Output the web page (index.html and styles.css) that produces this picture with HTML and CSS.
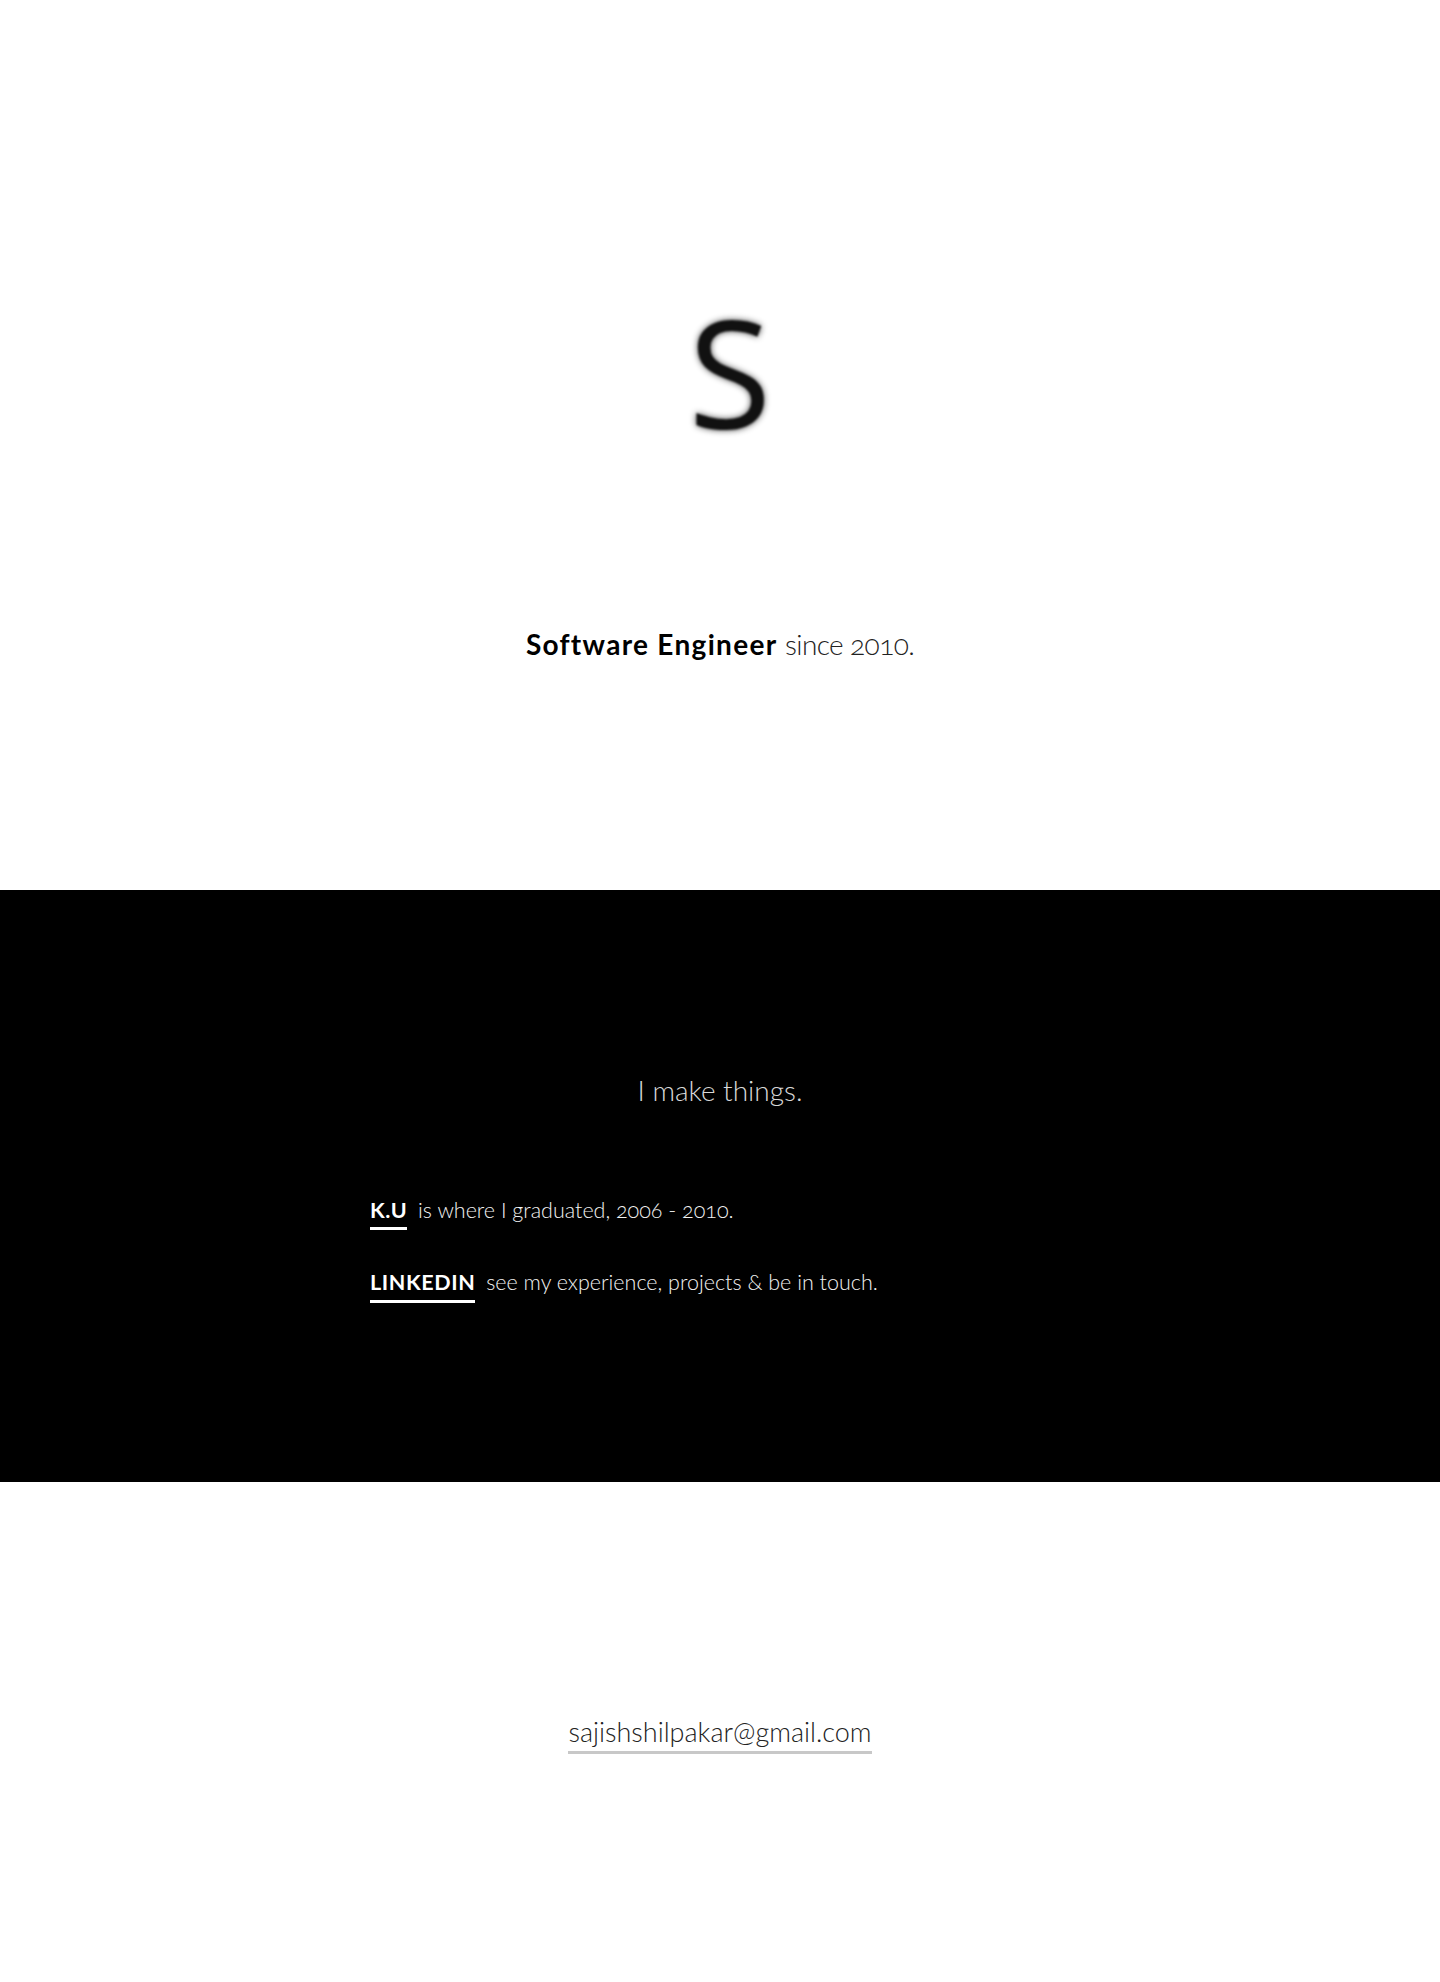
FILE: index.html
```html
<!DOCTYPE html>
<html lang="en">
<head>
<meta charset="utf-8">
<title>Sajish Shilpakar</title>
<link rel="stylesheet" href="styles.css">
</head>
<body>
<header class="hero">
  <div class="logo">S</div>
  <p class="tagline"><strong>Software Engineer</strong> <span class="since">since 2010.</span></p>
</header>
<section class="about">
  <h2 class="about-title">I make things.</h2>
  <div class="about-list">
    <p class="about-row"><a class="label" href="#">K.U</a> is where I graduated, 2006 - 2010.</p>
    <p class="about-row"><a class="label" href="#">LINKEDIN</a> see my experience, projects &amp; be in touch.</p>
  </div>
</section>
<footer class="contact">
  <a class="email" href="#">sajishshilpakar@gmail.com</a>
</footer>
</body>
</html>
```
FILE: styles.css
```css
* { box-sizing: border-box; }
html, body { margin: 0; padding: 0; }
body {
  background: #fff;
  font-family: "Lato", "Open Sans", sans-serif;
  color: #222;
  font-variant-numeric: oldstyle-nums;
}
.hero {
  height: 890px;
  padding-top: 296px;
  display: flex;
  flex-direction: column;
  align-items: center;
}
.logo {
  font-family: "Open Sans", sans-serif;
  font-weight: 400;
  font-size: 150px;
  line-height: 1;
  height: 150px;
  color: #111;
  margin-left: 20px;
  text-shadow: 0 0 6px rgba(0,0,0,0.75);
  filter: blur(1px);
}
.tagline {
  margin: 182px 0 0;
  font-size: 28px;
  line-height: 1.2;
  font-weight: 300;
  color: #222;
}
.tagline strong { font-weight: 700; color: #000; letter-spacing: 1.3px; }
.since { letter-spacing: -0.6px; }
.about {
  background: #000;
  height: 592px;
  padding-top: 184px;
}
.about-title {
  margin: 0;
  text-align: center;
  font-size: 28px;
  line-height: 1.2;
  font-weight: 300;
  color: #d8d8d8;
}
.about-list {
  width: 700px;
  margin: 90px auto 0;
  display: flex;
  flex-direction: column;
  gap: 40px;
}
.about-row {
  margin: 0;
  font-size: 21.5px;
  line-height: 1.2;
  font-weight: 300;
  color: #f2f2f2;
}
.label {
  display: inline-block;
  color: #fff;
  font-weight: 700;
  letter-spacing: 0.6px;
  text-decoration: none;
  padding-bottom: 4px;
  border-bottom: 3px solid #fff;
  margin-right: 5px;
}
.contact {
  height: 500px;
  padding-top: 234px;
  text-align: center;
}
.email {
  display: inline-block;
  font-size: 27px;
  line-height: 1.2;
  font-weight: 300;
  color: #222;
  text-decoration: none;
  padding-bottom: 3px;
  border-bottom: 3px solid #c8c8c8;
}
```
